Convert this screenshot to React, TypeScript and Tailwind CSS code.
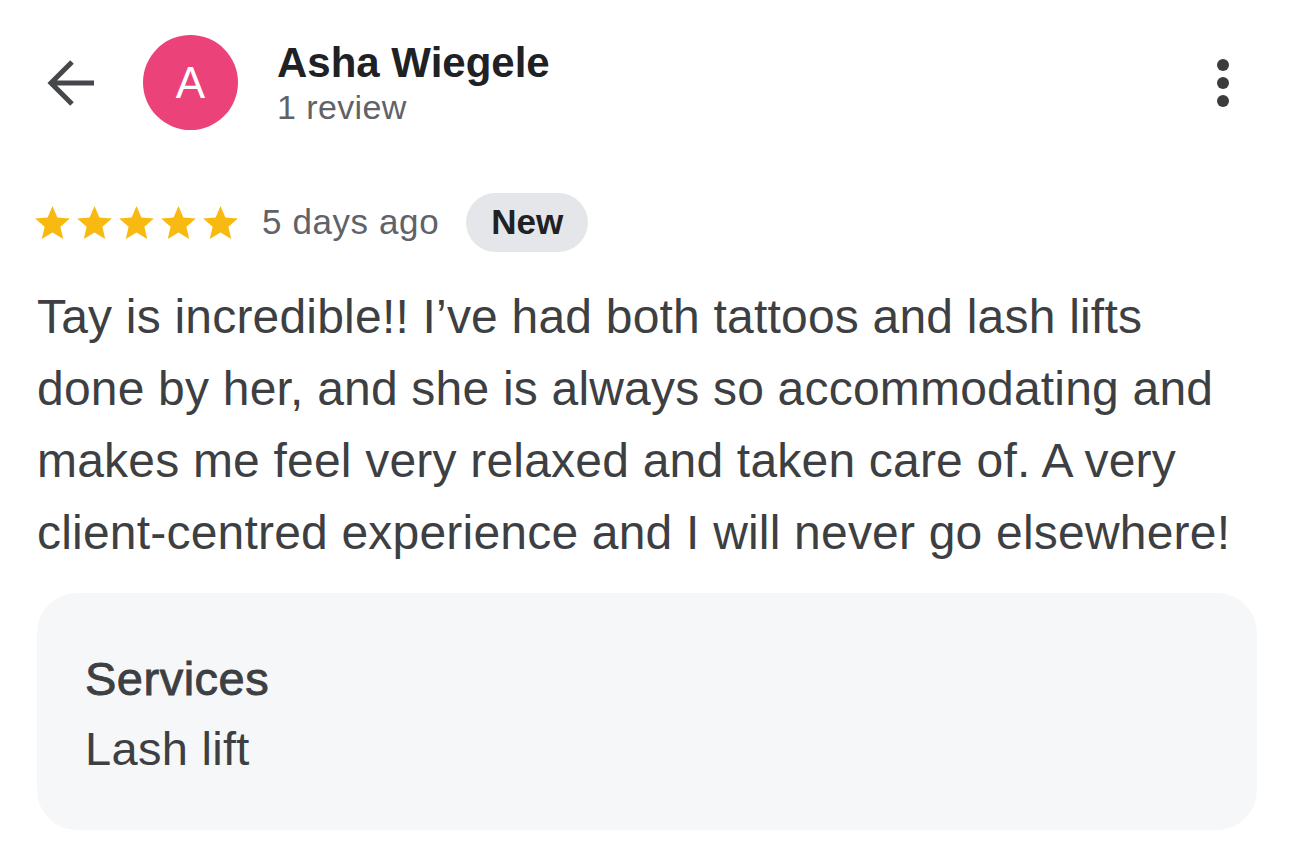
const STAR = "M12 17.27L18.18 21l-1.64-7.03L22 9.24l-7.19-.61L12 2 9.19 8.63 2 9.24l5.46 4.73L5.82 21z";

function Star() {
  return (
    <svg width="35" height="33" viewBox="2 2 20 19" className="shrink-0">
      <path d={STAR} fill="#f8b910" />
    </svg>
  );
}

function BackArrow() {
  return (
    <svg width="50" height="48" viewBox="0 0 50 48" className="shrink-0">
      <path d="M48 24H5M26 3L5 24l21 21" fill="none" stroke="#45474a" strokeWidth="5" />
    </svg>
  );
}

export default function App() {
  return (
    <div className="min-h-screen bg-white font-['Liberation_Sans',Arial,sans-serif] text-[#3d3f42]">
      <div className="px-[37px] pt-[35px]">
        <div className="flex h-[95px] items-center">
          <div className="ml-[9px] flex w-[50px] items-center">
            <BackArrow />
          </div>
          <div className="ml-[47px] flex h-[95px] w-[95px] shrink-0 items-center justify-center rounded-full bg-[#ea4279] text-[44px] leading-none text-white">
            A
          </div>
          <div className="ml-[39px] flex flex-col">
            <div className="text-[42px] font-bold leading-[48px] text-[#202124]">Asha Wiegele</div>
            <div className="text-[34px] leading-[40px] tracking-[0.4px] text-[#5f6368]">1 review</div>
          </div>
          <div className="ml-auto mr-[28px] flex flex-col items-center gap-[6px]">
            <span className="h-[12px] w-[12px] rounded-full bg-[#3c3c3e]" />
            <span className="h-[12px] w-[12px] rounded-full bg-[#3c3c3e]" />
            <span className="h-[12px] w-[12px] rounded-full bg-[#3c3c3e]" />
          </div>
        </div>

        <div className="mt-[63px] flex h-[59px] items-center">
          <div className="-ml-[2px] flex gap-[7px]">
            <Star />
            <Star />
            <Star />
            <Star />
            <Star />
          </div>
          <span className="ml-[24px] text-[35px] tracking-[0.6px] text-[#5f6368]">5 days ago</span>
          <span className="ml-[27px] flex h-[59px] items-center rounded-full bg-[#e4e6e9] px-[25px] text-[35px] font-bold text-[#202124]">
            New
          </span>
        </div>

        <p className="mt-[29px] text-[48px] leading-[72px] tracking-[0.2px]">
          Tay is incredible!! I’ve had both tattoos and lash lifts done by her, and she is always so accommodating and makes me feel very relaxed and taken care of. A very client-centred experience and I will never go elsewhere!
        </p>

        <div className="mt-[24px] rounded-[40px] bg-[#f6f7f9] pl-[48px] pt-[51px] pb-[46px]">
          <div className="text-[47px] leading-[70px] tracking-[0.5px] [-webkit-text-stroke:0.9px_#3d3f42]">Services</div>
          <div className="text-[47px] leading-[70px] tracking-[0.3px]">Lash lift</div>
        </div>
      </div>
    </div>
  );
}
